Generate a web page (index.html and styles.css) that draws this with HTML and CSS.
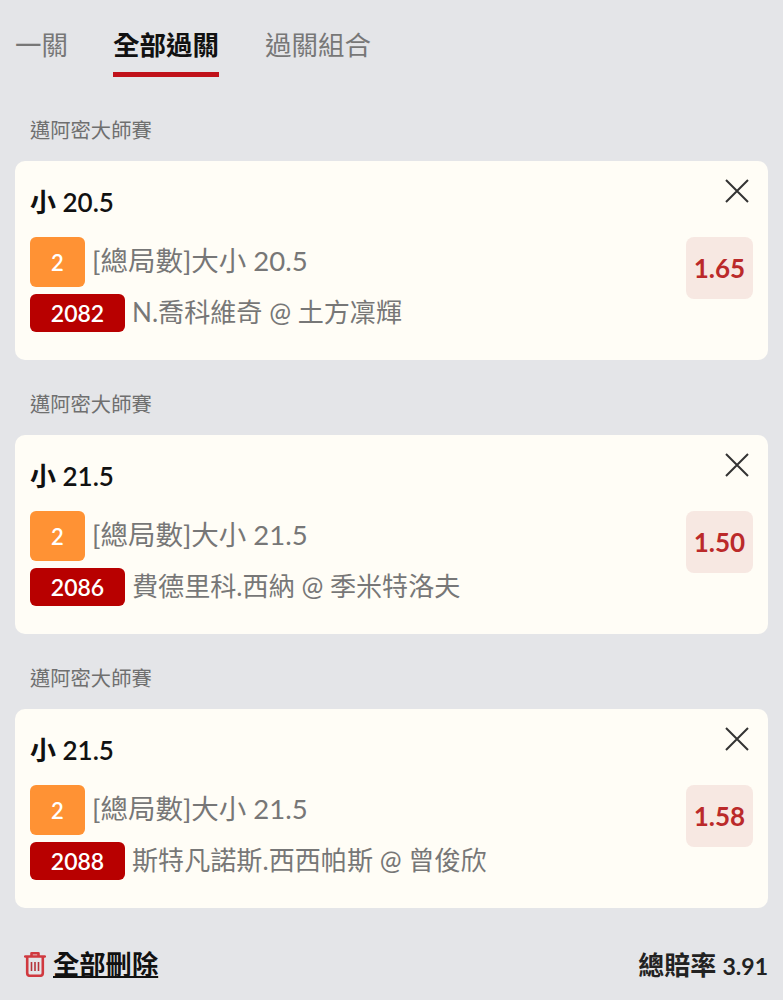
FILE: index.html
```html
<!DOCTYPE html>
<html lang="zh-Hant">
<head>
  <meta charset="UTF-8" />
  <meta name="viewport" content="width=device-width, initial-scale=1.0"/>
  <title>過關</title>
  <link rel="stylesheet" href="styles.css">
</head>
<body>
  <div class="tabs">
    <div class="tab">一關</div>
    <div class="tab active">全部過關</div>
    <div class="tab">過關組合</div>
  </div>

  <div class="league">邁阿密大師賽</div>
  <div class="card">
    <div class="card-main">
      <div class="pick">小 20.5</div>
      <div class="row">
        <span class="num">2</span>
        <span class="market">[總局數]大小 20.5</span>
      </div>
      <div class="row row-match">
        <span class="code">2082</span>
        <span class="teams">N.喬科維奇 @ 土方凜輝</span>
      </div>
    </div>
    <div class="card-side">
      <svg class="close" viewBox="0 0 24 24"><path d="M1 1 L23 23 M23 1 L1 23"/></svg>
      <div class="odds">1.65</div>
    </div>
  </div>

  <div class="league">邁阿密大師賽</div>
  <div class="card">
    <div class="card-main">
      <div class="pick">小 21.5</div>
      <div class="row">
        <span class="num">2</span>
        <span class="market">[總局數]大小 21.5</span>
      </div>
      <div class="row row-match">
        <span class="code">2086</span>
        <span class="teams">費德里科.西納 @ 季米特洛夫</span>
      </div>
    </div>
    <div class="card-side">
      <svg class="close" viewBox="0 0 24 24"><path d="M1 1 L23 23 M23 1 L1 23"/></svg>
      <div class="odds">1.50</div>
    </div>
  </div>

  <div class="league">邁阿密大師賽</div>
  <div class="card">
    <div class="card-main">
      <div class="pick">小 21.5</div>
      <div class="row">
        <span class="num">2</span>
        <span class="market">[總局數]大小 21.5</span>
      </div>
      <div class="row row-match">
        <span class="code">2088</span>
        <span class="teams">斯特凡諾斯.西西帕斯 @ 曾俊欣</span>
      </div>
    </div>
    <div class="card-side">
      <svg class="close" viewBox="0 0 24 24"><path d="M1 1 L23 23 M23 1 L1 23"/></svg>
      <div class="odds">1.58</div>
    </div>
  </div>

  <div class="footer">
    <div class="delete-all">
      <svg class="trash" viewBox="0 0 22 26">
        <path d="M7.5 4.5 V2.2 H14.5 V4.5 M1.2 5.5 H20.8 M3.2 5.5 V22 Q3.2 24.8 6 24.8 H16 Q18.8 24.8 18.8 22 V5.5"/>
        <path class="trash-bars" d="M7.5 11 V20 M11 11 V20 M14.5 11 V20"/>
      </svg>
      <span class="delete-text">全部刪除</span>
    </div>
    <div class="total">總賠率 <span class="total-num">3.91</span></div>
  </div>
</body>
</html>
```

FILE: styles.css
```css
html, body {
  height: 100%;
}

body {
  margin: 0;
  padding: 0 15px;
  height: 1000px;
  box-sizing: border-box;
  overflow: hidden;
  background-color: #e4e5e8;
  font-family: Lato, "Noto Sans CJK TC", sans-serif;
}

.tabs {
  display: flex;
  gap: 45px;
  height: 77px;
}

.tab {
  padding-top: 26px;
  font-size: 26.5px;
  line-height: 38px;
  color: #777;
  box-sizing: border-box;
  height: 77px;
}

.tab.active {
  margin-right: 1px;
  color: #111;
  font-weight: bold;
  border-bottom: 5px solid #c0111a;
}

.league {
  margin: 38px 0 16px 15px;
  font-size: 20.3px;
  line-height: 30px;
  color: #6f6f6f;
}

.card + .league {
  margin-top: 29.5px;
}

.card {
  display: flex;
  justify-content: space-between;
  height: 198.5px;
  box-sizing: border-box;
  padding: 0 15px;
  background-color: #fffdf6;
  border-radius: 10px;
}

.pick {
  margin-top: 22px;
  margin-bottom: 16px;
  font-size: 26px;
  line-height: 38px;
  font-weight: 600;
  color: #111;
}

.row {
  display: flex;
  align-items: center;
  gap: 7px;
  height: 50px;
}

.row-match {
  height: 38px;
  margin-top: 7px;
}

.num {
  display: flex;
  align-items: center;
  justify-content: center;
  width: 55px;
  height: 50px;
  border-radius: 6px;
  background-color: #ff9234;
  color: #fff;
  font-size: 22px;
  font-weight: 600;
}

.code {
  display: flex;
  align-items: center;
  justify-content: center;
  width: 95px;
  height: 38px;
  border-radius: 6px;
  background-color: #b80000;
  color: #fff;
  font-size: 23px;
  font-weight: 600;
}

.market {
  font-size: 27.5px;
  line-height: 38px;
  color: #777;
  position: relative;
  top: -1px;
}

.teams {
  font-size: 26.1px;
  line-height: 38px;
  color: #777;
  position: relative;
  top: -1px;
}

.card-side {
  display: flex;
  flex-direction: column;
  align-items: flex-end;
}

.close {
  width: 24px;
  height: 24px;
  margin-top: 18px;
  margin-bottom: 34px;
  margin-right: 4px;
  fill: none;
  stroke: #333;
  stroke-width: 2;
}

.odds {
  width: 67px;
  height: 62px;
  line-height: 62px;
  text-align: center;
  border-radius: 8px;
  background-color: #f7e8e2;
  color: #bb2a2a;
  font-size: 26px;
  font-weight: bold;
}

.footer {
  display: flex;
  justify-content: space-between;
  align-items: center;
  margin-top: 36.5px;
  height: 40px;
}

.delete-all {
  display: flex;
  align-items: center;
  gap: 7px;
  padding-left: 9px;
}

.trash {
  width: 22px;
  height: 26px;
  fill: none;
  stroke: #d0393f;
  stroke-width: 2.6;
  stroke-linecap: round;
  stroke-linejoin: round;
}

.trash-bars {
  stroke: #b5343a;
  stroke-width: 1.6;
  stroke-linecap: butt;
}

.delete-text {
  font-size: 26.3px;
  line-height: 38px;
  font-weight: bold;
  color: #111;
  text-decoration: underline;
}

.total {
  padding-bottom: 2px;
  font-size: 26px;
  font-weight: bold;
  color: #222;
}

.total-num {
  font-size: 23px;
}
```
